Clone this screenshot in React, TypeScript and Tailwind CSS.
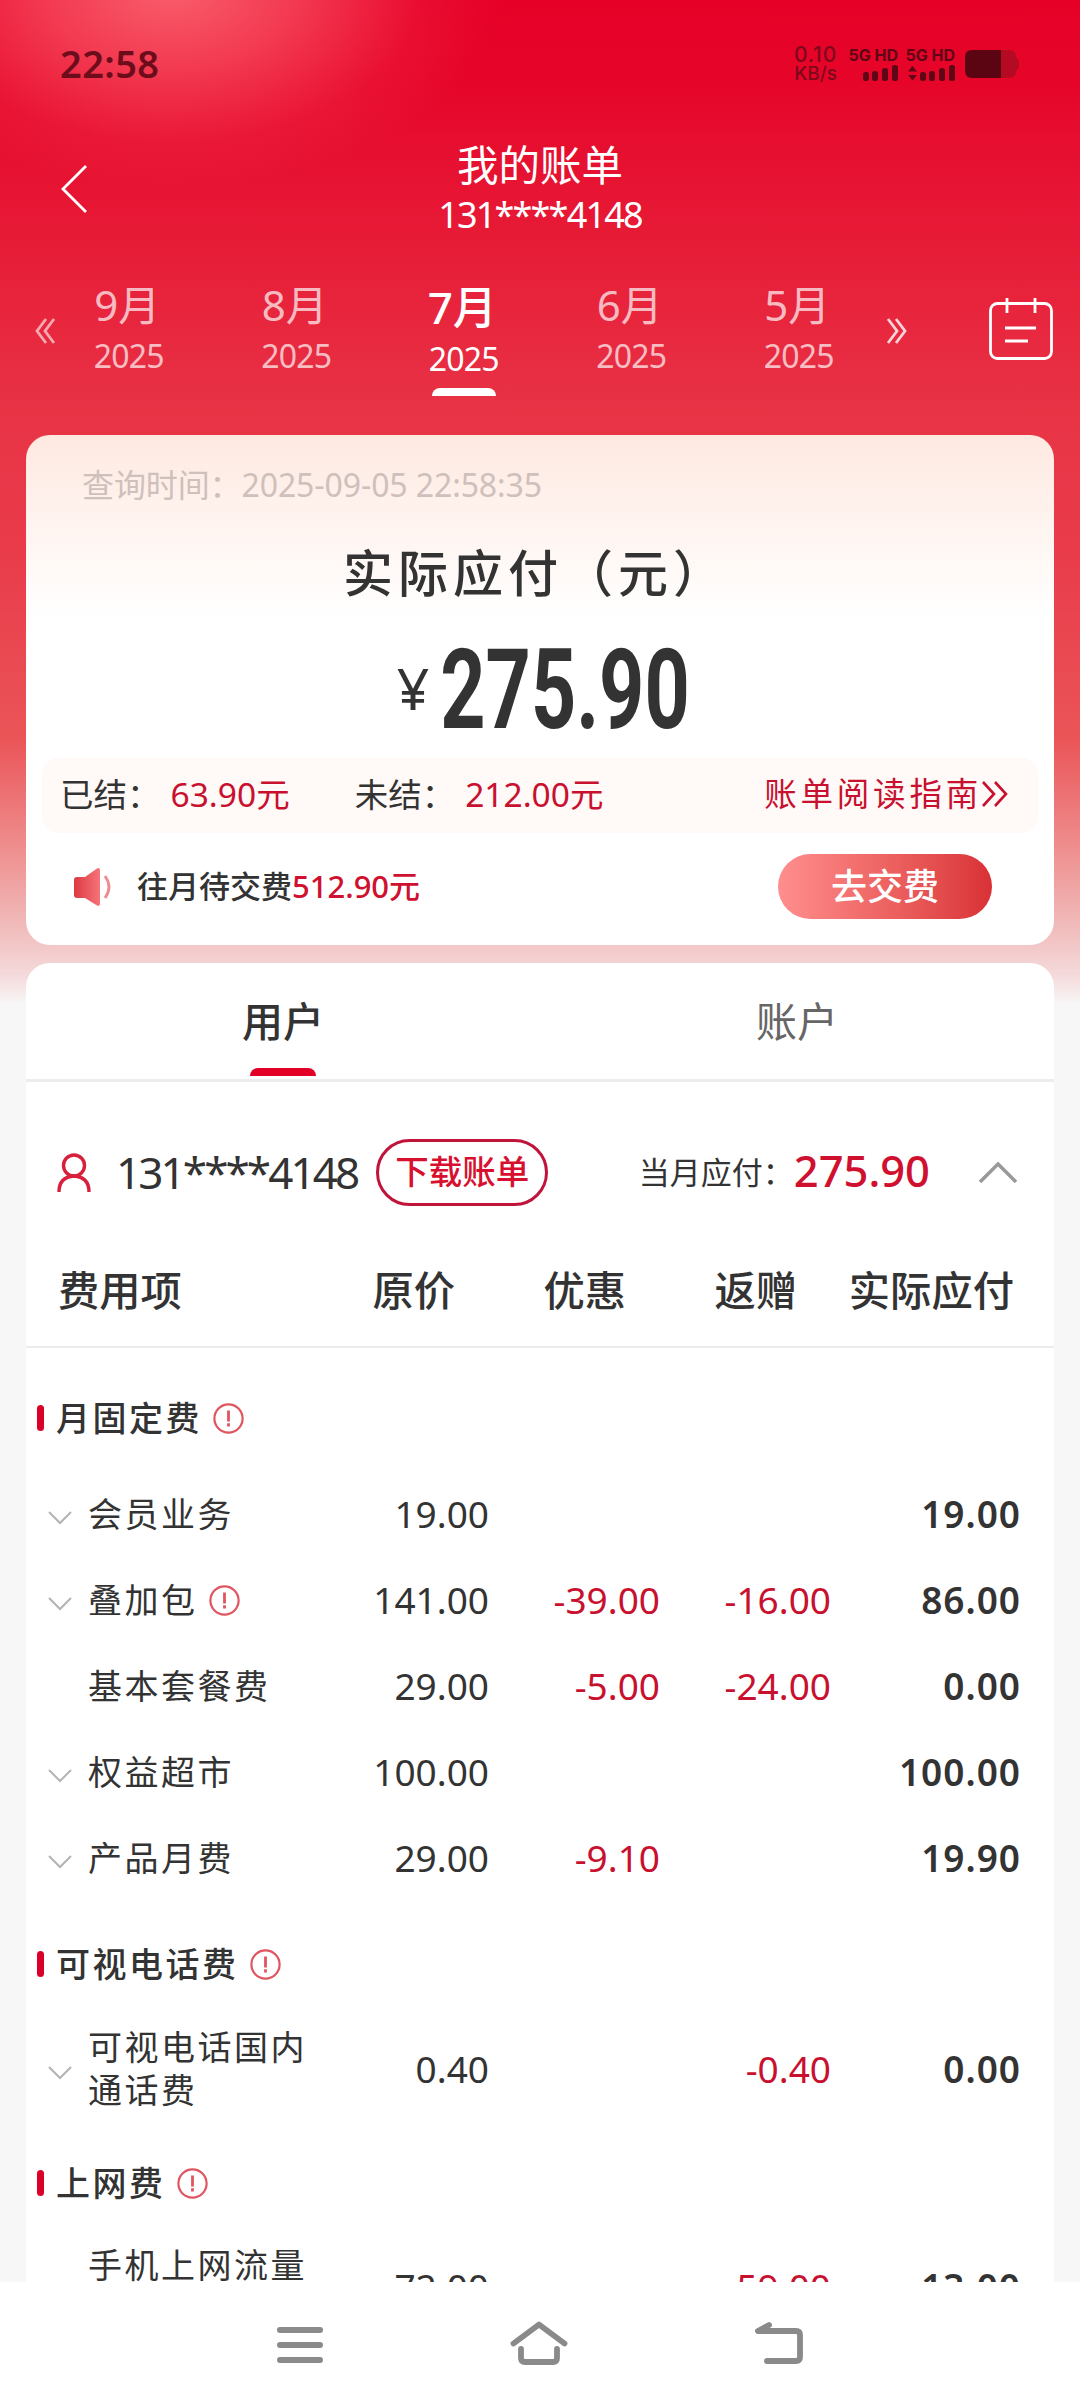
import { clsx } from "clsx";

const FONT = "font-['Noto_Sans','Noto_Sans_CJK_SC',sans-serif]";

const MONTHS = [
  { month: "9月", year: "2025" },
  { month: "8月", year: "2025" },
  { month: "7月", year: "2025", active: true },
  { month: "6月", year: "2025" },
  { month: "5月", year: "2025" },
];

type Row = {
  name: string;
  price: string;
  discount?: string;
  gift?: string;
  total: string;
  expandable?: boolean;
  info?: boolean;
};

const FIXED: Row[] = [
  { name: "会员业务", price: "19.00", total: "19.00", expandable: true },
  { name: "叠加包", price: "141.00", discount: "-39.00", gift: "-16.00", total: "86.00", expandable: true, info: true },
  { name: "基本套餐费", price: "29.00", discount: "-5.00", gift: "-24.00", total: "0.00" },
  { name: "权益超市", price: "100.00", total: "100.00", expandable: true },
  { name: "产品月费", price: "29.00", discount: "-9.10", total: "19.90", expandable: true },
];

const VIDEO: Row[] = [
  { name: "可视电话国内通话费", price: "0.40", gift: "-0.40", total: "0.00", expandable: true },
];

const NETWORK: Row[] = [
  { name: "手机上网流量费", price: "72.00", gift: "-59.00", total: "13.00" },
];

function InfoIcon() {
  return (
    <svg width="31" height="31" viewBox="0 0 31 31" fill="none" className="shrink-0" stroke="#df5560">
      <circle cx="15.5" cy="15.5" r="14.1" strokeWidth="2.2" />
      <path d="M15.5 7.5v11M15.5 20.3v3.2" strokeWidth="2.8" />
    </svg>
  );
}

function Signal({ arrows = false }: { arrows?: boolean }) {
  return (
    <div className="flex w-12 flex-col items-end">
      <span className="text-[16px] font-bold leading-4 whitespace-nowrap">5G HD</span>
      <svg width="47" height="17" viewBox="0 0 47 17" fill="currentColor" className="mt-px">
        {arrows && <path d="M0 7.5 4.5 2 9 7.5zM0 11h9L4.5 16.5z" />}
        <rect x="12" y="8" width="6" height="9" rx="2.5" />
        <rect x="21" y="7" width="6" height="10" rx="2.5" />
        <rect x="31" y="4" width="6" height="13" rx="2.5" />
        <rect x="41" y="1" width="6" height="16" rx="2.5" />
      </svg>
    </div>
  );
}

function StatusBar() {
  return (
    <div className="flex h-32 items-center justify-between pl-[60px] pr-[60px]">
      <span className="pb-0.5 text-[38px] font-semibold tracking-[0.4px] text-[#6d0d1c]">22:58</span>
      <div className="flex items-center font-['Inter'] text-[#5f0616]">
        <div className="mr-[13px] flex w-12 flex-col items-end font-medium text-[#7d081c]">
          <span className="text-[21px] leading-[20px] tracking-[0.8px]">0.10</span>
          <span className="text-[19px] leading-[18px]">KB/s</span>
        </div>
        <Signal />
        <div className="w-[9px]" />
        <Signal arrows />
        <svg width="55" height="28" viewBox="0 0 55 28" className="ml-[10px]">
          <path d="M36 0h8q7 0 7 7 3 2 3 7t-3 7q0 7-7 7h-8z" fill="#b50a24" />
          <path d="M7 0h29v28H7q-7 0-7-7V7q0-7 7-7z" fill="#5b0512" />
        </svg>
      </div>
    </div>
  );
}

function Header() {
  return (
    <header className="grid h-[128px] grid-cols-[1fr_auto_1fr] items-center">
      <svg width="26" height="48" viewBox="0 0 26 48" fill="none" stroke="#fff" strokeWidth="2.8" className="-mt-[7px] ml-[61px]">
        <path d="M25 1 2 24l23 23" />
      </svg>
      <div className="flex flex-col items-center pb-1 text-white">
        <h1 className="text-[41.5px] leading-[50px]">我的账单</h1>
        <span className="text-[36px] leading-[50px] tracking-[-1.8px]">131****4148</span>
      </div>
    </header>
  );
}

function Chevrons({ left = false }: { left?: boolean }) {
  return (
    <svg
      width="22"
      height="26"
      viewBox="0 0 22 26"
      fill="none"
      stroke="#fff"
      strokeWidth="2.8"
      className={clsx(left ? "rotate-180 opacity-60" : "opacity-80")}
    >
      <path d="M2 1l9 12-9 12M10 1l9 12-9 12" />
    </svg>
  );
}

function MonthPicker() {
  return (
    <div className="flex h-[179px] pl-[34px]">
      <div className="mt-[62px] w-[11px] shrink-0">
        <Chevrons left />
      </div>
      <div className="flex">
        {MONTHS.map((m) => (
          <div
            key={m.month}
            className={clsx("flex w-[167.5px] flex-col items-center", m.active ? "pt-[3px] text-white" : "pt-px text-white/70")}
          >
            <span className={clsx("pr-[3px] leading-[96px]", m.active ? "text-[44px] font-medium" : "text-[42px]")}>
              {m.month}
            </span>
            <span className={clsx("text-[32px] leading-[48px] tracking-[-0.8px]", m.active ? "-mt-5" : "-mt-[21px]")}>
              {m.year}
            </span>
            {m.active && <span className="mt-[5px] h-2 w-16 rounded-t-lg bg-white" />}
          </div>
        ))}
      </div>
      <div className="ml-[3px] mt-[62px]">
        <Chevrons />
      </div>
      <svg width="64" height="64" viewBox="0 0 64 64" fill="none" stroke="#fff" strokeWidth="2.8" className="ml-[81px] mt-[41px]">
        <rect x="1.5" y="6.5" width="61" height="55" rx="7" />
        <path d="M18 1v15M46 1v15M16 31h31M16 44h23" />
      </svg>
    </div>
  );
}

function SummaryCard() {
  return (
    <section className="mx-[26px] h-[510px] rounded-[24px] bg-gradient-to-b from-[#fee9e1] to-white to-36% px-4">
      <p className="pl-10 pt-[26px] text-[32px] leading-[48px] tracking-[-0.1px] text-[#cfc0bc]">查询时间：2025-09-05 22:58:35</p>
      <h2 className="ml-[301px] mt-7 text-[50px] font-medium leading-[72px] tracking-[5px] text-[#333]">实际应付（元）</h2>
      <div className="mt-4 flex h-[133px] justify-center pl-3 text-[#333]">
        <span className="mt-[27px] text-[57px] leading-[72px]">¥</span>
        <span className="mt-0.5 w-[266px] origin-left scale-x-[0.705] pl-4 font-['Roboto'] text-[112px] font-bold leading-[126px]">
          275.90
        </span>
      </div>
      <div className="flex h-[75px] items-center rounded-2xl bg-[#fff9f7] pb-[3px] pl-[18px] pr-[30px] text-[33.5px] text-[#333]">
        <span>已结：</span>
        <span className="ml-2.5 text-[#c8102f]">63.90元</span>
        <span className="ml-[65px]">未结：</span>
        <span className="ml-2.5 text-[#c8102f]">212.00元</span>
        <span className="ml-auto text-[32.5px] tracking-[3.8px] text-[#c8102f]">账单阅读指南</span>
        <svg width="26" height="26" viewBox="0 0 26 26" fill="none" stroke="#c8102f" strokeWidth="2.6">
          <path d="M1 1l11 12L1 25M13 1l11 12-11 12" />
        </svg>
      </div>
      <div className="flex h-[107px] items-center pl-8 pr-[46px]">
        <svg width="38" height="40" viewBox="0 0 38 40" fill="none">
          <defs>
            <linearGradient id="horn" x1="0" y1="0" x2="1" y2="0">
              <stop stopColor="#dc3a40" />
              <stop offset="1" stopColor="#f6747a" />
            </linearGradient>
          </defs>
          <path d="M3 10h8L23 1.5q3-1.5 3 2v33q0 3.5-3 2L11 31H3q-3 0-3-3V13q0-3 3-3z" fill="url(#horn)" />
          <path d="M31 9q8 11 0 22" stroke="#f08a8e" strokeWidth="2.8" />
        </svg>
        <p className="ml-[25px] text-[31px] font-medium text-[#333]">
          往月待交费<span className="text-[#d0102f]">512.90元</span>
        </p>
        <button className="ml-auto h-[65px] w-[214px] rounded-full bg-gradient-to-r from-[#ff8e8e] to-[#d93036] text-[36px] font-medium text-white">
          去交费
        </button>
      </div>
    </section>
  );
}

function BillRow({ row, tall = false }: { row: Row; tall?: boolean }) {
  return (
    <div className={clsx("flex items-center text-[37px] text-[#333]", tall ? "h-[124px]" : "h-[86px]")}>
      <div className="flex w-[62px] shrink-0 justify-end pr-4">
        {row.expandable && (
          <svg width="24" height="14" viewBox="0 0 24 14" fill="none" stroke="#b3b3b3" strokeWidth="2" className="mt-[7px]">
            <path d="M1 1l11 11L23 1" />
          </svg>
        )}
      </div>
      <div className="flex w-[228px] items-center gap-[11px] text-[34px] leading-[43px] tracking-[2.5px]">
        <span>{row.name}</span>
        {row.info && <InfoIcon />}
      </div>
      <span className="w-[173px] text-right">{row.price}</span>
      <span className="w-[171px] text-right text-[#c8102f]">{row.discount}</span>
      <span className="w-[171px] text-right text-[#c8102f]">{row.gift}</span>
      <span className="w-[190px] text-right font-semibold tracking-[1px]">{row.total}</span>
    </div>
  );
}

function SectionTitle({ title }: { title: string }) {
  return (
    <div className="flex h-[60px] items-center pl-[11px]">
      <span className="h-[26px] w-[7px] rounded-full bg-[#db0027]" />
      <h3 className="ml-3 mr-[11px] text-[34px] font-medium tracking-[2.5px] text-[#333]">{title}</h3>
      <InfoIcon />
    </div>
  );
}

function BillPanel() {
  return (
    <section className="mx-[26px] mt-[18px] h-[1320px] shrink-0 rounded-t-[24px] bg-white">
      <div className="flex h-[119px] border-b-[3px] border-[#ececec] text-[41px] leading-[60px]">
        <div className="flex w-1/2 flex-col items-center justify-between pb-[3px] pt-7 font-medium text-[#333]">
          用户
          <span className="h-2 w-[66px] rounded-t-lg bg-[#e30026]" />
        </div>
        <div className="w-1/2 pt-7 text-center text-[#666]">账户</div>
      </div>
      <div className="flex h-[181px] items-center pl-[31px] pr-[37px] text-[#333]">
        <svg width="34" height="40" viewBox="0 0 34 40" fill="none" stroke="#d8203c" strokeWidth="3.4">
          <circle cx="17" cy="12.5" r="10.5" />
          <path d="M2 39q0-15 15-16 15 1 15 16" />
        </svg>
        <span className="ml-[25px] pb-0.5 text-[44px] tracking-[-2.9px]">131****4148</span>
        <span className="ml-[19px] flex h-[67px] w-[172px] items-center justify-center rounded-full border-[3px] border-[#c0143a] pb-[3px] text-[33.5px] font-medium text-[#d8102f]">
          下载账单
        </span>
        <span className="ml-auto text-[31px]">当月应付：</span>
        <span className="pb-[3px] text-[43.5px] font-medium text-[#d0102f]">275.90</span>
        <svg width="38" height="21" viewBox="0 0 38 21" fill="none" stroke="#999" strokeWidth="3.5" className="ml-[49px]">
          <path d="M1 20 19 2l18 18" />
        </svg>
      </div>
      <div className="flex h-[85px] border-b-2 border-[#ececec] text-[41.3px] font-medium leading-[54px] text-[#333]">
        <span className="w-[258px] pl-8">费用项</span>
        <span className="w-[171px] text-right">原价</span>
        <span className="w-[171px] text-right">优惠</span>
        <span className="w-[171px] text-right">返赠</span>
        <span className="w-[217px] text-right">实际应付</span>
      </div>
      <div className="pt-10">
        <SectionTitle title="月固定费" />
        <div className="pt-[23px]">
          {FIXED.map((row) => (
            <BillRow key={row.name} row={row} />
          ))}
        </div>
      </div>
      <div className="pt-[33px]">
        <SectionTitle title="可视电话费" />
        <div className="pb-[22px] pt-[13px]">
          {VIDEO.map((row) => (
            <BillRow key={row.name} row={row} tall />
          ))}
        </div>
      </div>
      <div>
        <SectionTitle title="上网费" />
        <div className="pt-3">
          {NETWORK.map((row) => (
            <BillRow key={row.name} row={row} tall />
          ))}
        </div>
      </div>
    </section>
  );
}

function NavBar() {
  return (
    <nav className="flex h-[126px] shrink-0 items-center justify-between bg-white pl-[277px] pr-[275px]">
      <svg width="46" height="38" viewBox="0 0 46 38" stroke="#8a8a8a" strokeWidth="6" strokeLinecap="round">
        <path d="M3 4h40M3 19h40M3 34h40" />
      </svg>
      <svg width="58" height="44" viewBox="0 0 58 44" fill="none" stroke="#8a8a8a" strokeWidth="5.8" strokeLinecap="round" strokeLinejoin="round" className="-mt-1">
        <path d="M3.5 22.5 29 3.5l25.5 19M11 28v9q0 4 4 4h28q4 0 4-4v-9" />
      </svg>
      <svg width="50" height="44" viewBox="0 0 50 44" fill="none" stroke="#8a8a8a" strokeWidth="5.8" strokeLinecap="round" strokeLinejoin="round" className="-mt-1">
        <path d="M14 4 3 10h38q4 0 4 4v22q0 4-4 4H12" />
      </svg>
    </nav>
  );
}

export default function App() {
  return (
    <div className={clsx(FONT, "flex h-[2408px] w-[1080px] flex-col overflow-hidden bg-[#f7f7f7]")}>
      <main className="h-[2282px] shrink-0 overflow-hidden bg-[radial-gradient(ellipse_330px_200px_at_170px_-10px,rgba(255,125,130,0.75),rgba(255,110,120,0.5)_40%,rgba(255,90,105,0.14)_76%,rgba(255,90,105,0)),linear-gradient(#e60027_0,#e60529_80px,#e83446_420px,#e93c4b_560px,#ea5558_740px,#ef8f8f_850px,#f1bdbd_930px,#f5dadb_975px,#f7f7f7_1005px)]">
        <StatusBar />
        <Header />
        <MonthPicker />
        <SummaryCard />
        <BillPanel />
      </main>
      <NavBar />
    </div>
  );
}
